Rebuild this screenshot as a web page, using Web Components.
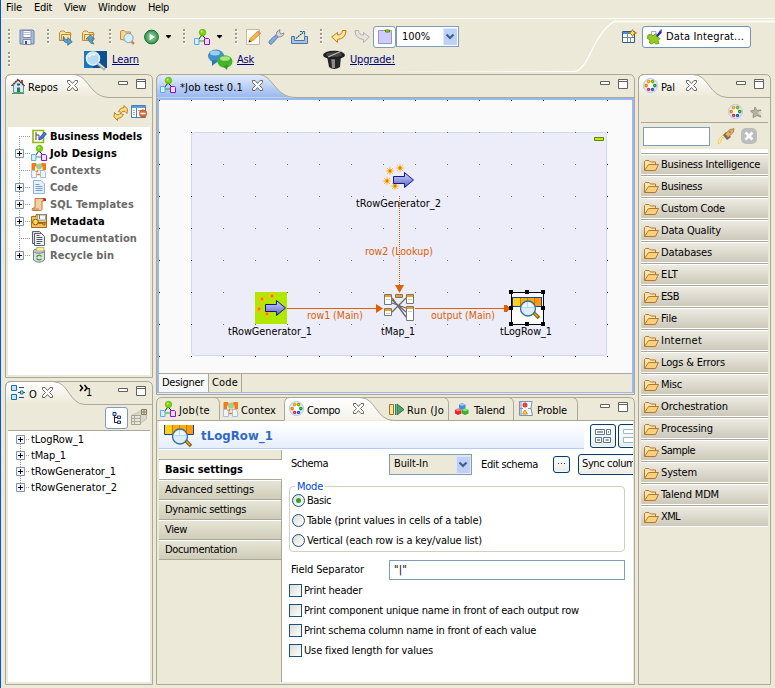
<!DOCTYPE html>
<html lang="en">
<head>
<meta charset="utf-8">
<title>Job designer</title>
<style>
html,body{margin:0;padding:0}
body{width:775px;height:688px;overflow:hidden;background:#ece9d8;color:#000;font:11px/14px "DejaVu Sans Condensed","DejaVu Sans",sans-serif;font-stretch:condensed}
</style>
</head>
<body>
<ide-window></ide-window>
<script>
const shapes = {
  job: (a='') => `<path d="M8 6L4 11M8 6L13 11" stroke="#222" fill="none"/><path d="M5 12H12" stroke="#18b020" fill="none"/><circle cx="8.500" cy="3.500" r="3.200" fill="#79d70a" stroke="#4a9a10" stroke-width=".6"/><circle cx="7.600" cy="2.600" r="1.100" fill="#c8f060"/><path d="M.500 9.500h3.500l1 1v5h-4.500z" fill="#d8efff" stroke="#58aef0"/><path d="M10.500 9.500h4l1 1v5h-5z" fill="#f0dcff" stroke="#8c10d8"/>`,
  palette: () => `<circle cx="7.500" cy="7.500" r="7" fill="#dfe9f8" stroke="#b4c9e6"/><circle cx="7.500" cy="7.500" r="3" fill="#fff"/><g fill="#fff" stroke-width="1.400"><circle cx="5.600" cy="3.600" r="1.100" stroke="#f0a000"/><circle cx="9.600" cy="3.600" r="1.100" stroke="#8aa800"/><circle cx="3.200" cy="7.600" r="1.100" stroke="#f08000"/><circle cx="11.800" cy="7.600" r="1.100" stroke="#10a020"/><circle cx="5.600" cy="11.400" r="1" stroke="#e02040"/><circle cx="9.500" cy="11.400" r="1" stroke="#1850d0"/></g>`,
  folder: (y=0) => `<path d="M1.500 13.500V4.500L2.500 3.500H6L7.500 5H12.500V7" fill="#fde7ae" stroke="#b8772a"/><path d="M1.500 13.500L5.500 7.500H15.500L12.500 13.500Z" fill="#fbd07c" stroke="#b8772a"/>`,
};
const log = `<path d="M.5 0V9.500H9M21 9.500H29.500V0" fill="none" stroke="#183ca8"/><path d="M1 0H29V9H1z" fill="#ffb000"/><path d="M1 0H8V9H1z" fill="#ffd018"/><path d="M22 0h7v9h-7z" fill="#ff9a00"/><path d="M8.500 0V9M15.500 0V9M22.500 0V9" stroke="#c87800"/><path d="M21 15L27 21" stroke="#8a6510" stroke-width="3.500"/><path d="M21 15L26 20" stroke="#d8b040" stroke-width="1.200"/><circle cx="16" cy="11.500" r="7.500" fill="#d6edfc" fill-opacity=".93" stroke="#3a6c94" stroke-width="1.300"/><path d="M11 8q5-5 10 0v3H11z" fill="#fff" opacity=".6"/><path d="M15.500 5v6M10 10.500h12" stroke="#b8d8f0"/>`;
const spark = (x,y) => `<g transform="translate(${x} ${y})"><path d="M0-5L1-1L5 0L1 1L0 5L-1 1L-5 0L-1-1Z" fill="#ffc020"/><path d="M-3-3L3 3M3-3L-3 3" stroke="#f8b820" stroke-width=".9"/><circle r="1.400" fill="#e87800"/></g>`;
const rowgen = `${spark(7,7)}${spark(17,4)}${spark(4,17)}${spark(12,22)}<path d="M10.500 12.500H21.500V8.500L30.500 16L21.500 23.500V19.500H10.500Z" fill="url(#arrowFill)" stroke="#14148c"/>`;
const icons = {
  save:[16,16,`<path d="M1 1H14L15 2V15H1Z" fill="#a9bedd" stroke="#6884b4"/><path d="M4 1.500H12V8.500H4Z" fill="#fff" stroke="#88a"/><path d="M5 3.500h6M5 5.500h6" stroke="#b4c4dc"/><path d="M4 10.500h8v5H4z" fill="#e9edf3" stroke="#7d8eac"/><path d="M6 12h2v3H6z" fill="#456"/>`],
  imp:[16,16,`<path d="M1.500 11.500V3.500L3 2H6L7.500 3.500H12.500V11.500Z" fill="#fde2a0" stroke="#c48a34"/><path d="M3.500 11V5.500H13.500" fill="none" stroke="#c48a34"/><path d="M5 8Q5.500 11 9.500 11V8.500L14.500 12L10.500 16V14Q4 14 5 8Z" fill="#5ba0cc" stroke="#276a94" stroke-width=".7" transform="rotate(10 9 11)"/>`],
  exp:[16,16,`<path d="M1.500 11.500V3.500L3 2H6L7.500 3.500H12.500V11.500Z" fill="#fde2a0" stroke="#c48a34"/><path d="M3.500 11V5.500H13.500" fill="none" stroke="#c48a34"/><path d="M13 15Q8 14.500 7.500 10H5L9.500 6L13.500 10H11Q11 13 13 15Z" fill="#5ba0cc" stroke="#276a94" stroke-width=".7"/>`],
  find:[17,16,`<path d="M1.500 10.500V2.500L3 1.500H5L6.500 3H11.500V5L10 11.500Z" fill="#fbd48c" stroke="#c48a34"/><path d="M12 12L15 15" stroke="#d88838" stroke-width="2.500"/><circle cx="9.500" cy="9" r="4.600" fill="#d9ecfb" stroke="#7aa6d4"/>`],
  run:[16,16,`<circle cx="7.500" cy="8" r="6.900" fill="#3f9c58" stroke="#1d7038"/><circle cx="7.500" cy="8" r="5" fill="#68b478"/><path d="M5.500 4.500V11.500L11 8Z" fill="#fff"/>`],
  arrow:[7,4,`<path d="M1 0H6V1L3.500 3.500L1 1Z"/>`],
  grip:[3,15,`<path d="M1.500 1V15" stroke="#fff" stroke-width="2" stroke-dasharray="2 2"/><path d="M1 0V15" stroke="#9d9a8c" stroke-width="2" stroke-dasharray="2 2"/>`],
  job:[16,16,shapes.job()],
  edit:[16,16,`<path d="M.500.500H13.500V15.500H.500Z" fill="#fffdf6" stroke="#c0b8a0"/><path d="M3 13L4 9.500L12 2L14.500 4.500L6.500 12Z" fill="#f8b840" stroke="#b8803c" stroke-width=".7"/><path d="M11 3L13.500 5.500L15 4L12.500 1.500Z" fill="#d49080"/><path d="M2.500 13.500L5 12.500L3.500 11Z" fill="#222"/>`],
  wrench:[17,16,`<path d="M1 14Q0 12 8 6L10 8Q4 15 3 15.500Z" fill="#87aadf" stroke="#5378b4"/><path d="M8 6Q8 2 12 .7L11.500 3L13 5L16 4Q15.500 8 10.500 8Z" fill="#d8d9dc" stroke="#888b92"/>`],
  share:[17,16,`<path d="M.500 7.500H3.500V11.500H13.500V7.500H16.500V14.500H.500Z" fill="#a8c3e8" stroke="#52739e"/><path d="M5 9.500L12 3.500M9 2.500H13.500V6.500" fill="none" stroke="#13648c" stroke-width="1.200" stroke-dasharray="2 .6"/>`],
  undo:[16,15,`<path d="M6.500 13.500L.700 8L6.500 3.500V6Q11 6 11.500 1.500H15Q15 9.500 6.500 10.500Z" fill="#fde4a0" stroke="#c08010"/>`],
  redo:[16,15,`<path d="M9.500 13.500L15.300 8L9.500 3.500V6Q5 6 4.500 1.500H1Q1 9.500 9.500 10.500Z" fill="#e4e3de" stroke="#b5b3aa"/>`],
  note:[14,15,`<path d="M.500 1.500H13.500V14.500H.500Z" fill="#ccccff" stroke="#9797c0"/><path d="M7.500 1H11.500V3H7.500Z" fill="#a0f000" stroke="#5d7f00"/>`],
  persp:[15,15,`<path d="M.500 2.500H12.500V13.500H.500Z" fill="#fff" stroke="#365f7f"/><path d="M1 3H12V5H1Z" fill="#4a90d8"/><path d="M5.500 5V13M1 8.500H12M8.500 9V13" stroke="#6f8ca0"/><path d="M10.500.500L11.800 3L14.500 4L11.800 5L10.500 7.500L9.200 5L6.800 4L9.200 3Z" fill="#ffe060" stroke="#a07008" stroke-width=".8"/>`],
  puzzle:[16,16,`<path d="M4.500 2.500H9V6M4.500 2.500V6" fill="#fff" stroke="#aaa"/><path d="M1 6L4 5.500L6 7L8 5L11 5.500L10.500 8L13 9.500L11 11.500L12 14.500L8.500 15L7.500 13L5 15L2.500 14L3 11L.500 9.500Z" fill="#93cc22" stroke="#6fa716"/><path d="M9 7L13 1.500L15 1L14.500 4L10.500 8Z" fill="#2020c0"/><path d="M12.500 1L15 0L14.500 3Z" fill="#6b8cff"/>`],
  learn:[24,20,`<path d="M0 1H23V18H0Z" fill="#1678c4"/><path d="M13 1H23V18H9Z" fill="#0c4f92"/><circle cx="9" cy="8.500" r="6.500" fill="#b5dcf2" stroke="#e8f4fa" stroke-width="1.500"/><path d="M5 7Q7 3 11 5" stroke="#fff" fill="none" stroke-width="1.500"/><path d="M13.500 13L21 19.500" stroke="#a7afb7" stroke-width="3"/><path d="M13.500 12.500L20 18" stroke="#f4f4f4"/>`],
  ask:[25,21,`<ellipse cx="8" cy="7" rx="8" ry="6.500" fill="#4292c8"/><path d="M4 11L4 17L10 12Z" fill="#2a78b0"/><ellipse cx="7" cy="4" rx="5" ry="2.500" fill="#9ed0ee"/><ellipse cx="17" cy="12.500" rx="7.500" ry="6.200" fill="#44b42c"/><path d="M15 17L19 21L20 16Z" fill="#329a20"/><ellipse cx="17" cy="9.500" rx="5" ry="2.300" fill="#a8e480"/>`],
  hat:[25,21,`<path d="M5 7H19L18 18Q12 22 7 18Z" fill="#262626"/><path d="M9 8H13V19H10Z" fill="#8b8b8b"/><ellipse cx="12" cy="6" rx="11" ry="4.300" fill="#202020"/><ellipse cx="12" cy="5.500" rx="8" ry="2.300" fill="#484848"/><path d="M6 8L22 1" stroke="#bbb" stroke-width="1.300"/><path d="M20 2L23 .500" stroke="#eee" stroke-width="2"/>`],
  home:[14,16,`<path d="M10 2h2v5h-2z" fill="#a04828"/><path d="M2.500 7V14.500H12.500V7L7.500 2Z" fill="#d7e8f6" stroke="#6a8fa8"/><path d="M.500 8L7 1.500L13.500 8" fill="none" stroke="#5d3320" stroke-width="1.500" stroke-dasharray="2 .5"/><path d="M6 9.500H9V14H6Z" fill="#2f7f45"/><path d="M6 6.500h3" stroke="#28527a" stroke-width="2"/><path d="M1 15.500H13" stroke="#4aa04a"/>`],
  close:[11,11,`<path d="M.500.500H3L5.500 3.500L8 .500H10.500V2.500L7.500 5.500L10.500 8.500V10.500H8L5.500 7.500L3 10.500H.500V8.500L3.500 5.500L.500 2.500Z" fill="#fff" stroke="#6b6a62"/>`],
  min:[10,4,`<path d="M.500.500H9.500V3.500H.500Z" fill="#fff" stroke="#63625c"/>`],
  max:[10,10,`<path d="M.500.500H9.500V9.500H.500Z" fill="#fff" stroke="#63625c"/><path d="M1 2.500H9" stroke="#63625c"/>`],
  sync:[16,16,`<path d="M5.500 6.500Q7 2.500 11 2.500L11 .500L14.500 4L14 8.500L12 6.500Q9 5.500 8.500 7.500Z" fill="#fcdc80" stroke="#b07818" stroke-width=".9"/><path d="M10.500 9.500Q9 13.500 4.500 13.500L4.500 15.500L1 12L1.500 7.500L3.500 9.500Q6.500 10.500 7 8.500Z" fill="#fcdc80" stroke="#b07818" stroke-width=".9"/>`],
  filter:[16,14,`<path d="M.500.500H14.500V12.500H.500Z" fill="#fff" stroke="#4a82b8"/><path d="M1 1h13v2H1z" fill="#5b9cda"/><path d="M5.500 3V12" stroke="#4a82b8"/><path d="M2 5.500h2M2 7.500h2M2 9.500h2M7 5.500h4" stroke="#90b4d4"/><circle cx="12" cy="8.500" r="3.700" fill="#e46a30" stroke="#b84818" stroke-width=".6"/><path d="M9.500 8.500H14.500" stroke="#fff" stroke-width="1.500"/>`],
  biz:[16,15,`<path d="M2 1.500H12.500V13.500H2Z" fill="#fff" stroke="#8eb800" stroke-width="1.600"/><path d="M5 3v3h3v5M5 6v5" stroke="#444" fill="none"/><path d="M8 11L9 8L13.500 3L15.500 5L11 10Z" fill="#3f74e0" stroke="#1b3aa0" stroke-width=".6"/>`],
  ctx:[15,15,`<path d="M1 .500H5V3H3.500V8H1ZM11 .500H14.500V7H12V3H10.500V.500Z" fill="#f57b14" stroke="#f57b14"/><circle cx="8" cy="3.500" r="3" fill="#a2cc8a"/><path d="M7 7L5 10M9 7L11 10M6 11.500h4" stroke="#f57b14" stroke-width="1.500" fill="none"/><path d="M.500 7.500h3.500l1.500 2V14.500H.500ZM9.500 7.500h3.500l1.500 2V14.500H9.500Z" fill="#eef6ff" stroke="#a6bce0"/>`],
  code:[12,14,`<path d="M.500.500H8L11.500 4V13.500H.500Z" fill="#e8f1fc" stroke="#8fb3e0"/><path d="M2.500 4.500h4M2.500 6.500h7M2.500 8.500h7M2.500 10.500h7" stroke="#6f9cd8"/>`],
  sql:[15,15,`<path d="M4 1.500H13Q15 2 13.500 4H11V12.500Q10 14 8 13.500H1.500Q.500 12 2 11H4Z" fill="#f5cf9c" stroke="#b87840"/><path d="M2 12H8" stroke="#c08048"/><path d="M12 1L15 1.500V4L12.500 4Z" fill="#b03820"/>`],
  meta:[16,14,`<path d="M.500 2.500H5V.500H15.500V13.500H.500Z" fill="#f0c060" stroke="#a86c18"/><path d="M6.500 1h8v5H6.500z" fill="#f4f8ff" stroke="#8ca8c0"/><path d="M1 8.500H15M8.500 1V5" stroke="#a86c18"/><circle cx="4.500" cy="8" r="2.800" fill="#ffdc50" stroke="#985c08"/><path d="M7 8.500H14V11H12V9.500H7Z" fill="#e09a18" stroke="#8b5808" stroke-width=".7"/>`],
  doc:[15,15,`<path d="M1.500.500H8.500L11.500 3.500V12.500H1.500Z" fill="#d4dbe2" stroke="#566370"/><path d="M3.500 2.500H10.500L13.500 5.500V14.500H3.500Z" fill="#eef2f5" stroke="#566370"/><path d="M5.500 6.500h6M5.500 8.500h6M5.500 10.500h6M5.500 12.500h4" stroke="#4c5866"/><path d="M5.500 4.500h3" stroke="#c03030"/>`],
  bin:[14,16,`<path d="M1.500 4V13Q7 17.500 12.500 13V4Z" fill="#d9dfe6" stroke="#7b848d"/><ellipse cx="7" cy="4" rx="5.700" ry="2.200" fill="#c8d0d8" stroke="#77818a"/><path d="M4.500.500H12V4H4.500Z" fill="#f4f0a8" stroke="#a8a048" stroke-width=".7"/><path d="M4.500 10Q7 6.500 9.500 9.500M9.500 12Q7 14 4.500 11.500" stroke="#3fa01c" stroke-width="1.300" fill="none"/>`],
  plus:[9,9,`<path d="M.500.500H8.500V8.500H.500Z" fill="#f7f6f1" stroke="#7b94b8"/><path d="M2 4.500H7M4.500 2V7" stroke="#000"/>`],
  outline:[15,16,`<path d="M.500.500H5.500V5.500H.500ZM.500 9.500H5.500V14.500H.500Z" fill="#c5e4fb" stroke="#1272a8"/><path d="M8 2.500h5M8 12.500h5M7 7.500H9M12 7.500h2" stroke="#184f80"/><path d="M9.500 6h2.500v3H9.500z" fill="#c5e4fb" stroke="#1272a8"/>`],
  treebtn:[10,12,`<path d="M2.500 3V10.500H5M2.500 5.500H5" fill="none" stroke="#222"/><path d="M1 .500H4V3.500H1ZM5.500 4h3v2.500h-3zM5.500 9h3v2.500h-3z" fill="#d5e5f5" stroke="#203878"/>`],
  sheet:[16,16,`<path d="M.500 6.500L11 1.500H15.500V10L9 14.500H.500Z" fill="#d8d7cb" stroke="#c4c3b6"/><path d="M.500 6.500H9.500V15.500H.500Z" fill="#e8e7dd" stroke="#a3a294"/><path d="M1 9.500h9M1 12.500h9M3.500 7V15" stroke="#aaa999"/><path d="M10.500.500h5v5h-5z" fill="#ffe878" stroke="#777"/><path d="M13 1v4M11 3h4" stroke="#777"/>`],
  palette:[15,15,shapes.palette()],
  star:[13,12,`<path d="M5 1L7 4.500L11 4L9 7L11 11L7 9.500L3 11.500L3.500 7.500L.500 5L4 4.500Z" fill="#b4b1a5" stroke="#97958a"/><path d="M8 7h4M10 5v4" stroke="#dddace" stroke-width="1.500"/>`],
  rocket:[17,16,`<path d="M7 9L4 10L2 15L0 16L1 11L5 7Z" fill="#fff4b0" stroke="#f4cc68"/><path d="M5 7L8 4L13 9L9 12Z" fill="#6f6a68"/><path d="M7 6L12 1.500L16 .700L15.500 4L10 9.500Z" fill="#f2ad58" stroke="#a87030" stroke-width=".8"/><circle cx="12" cy="4" r="1" fill="#4a90c0"/>`],
  clear:[16,16,`<rect width="16" height="16" rx="5" fill="#bcbcbc"/><path d="M4.500 4.500L11.500 11.500M11.500 4.500L4.500 11.500" stroke="#fff" stroke-width="2.600"/>`],
  folder:[16,16,shapes.folder()],
  play:[16,13,`<path d="M.500 1.500H4.500V11.500H.500Z" fill="#ffe09c" stroke="#a17420"/><path d="M6.500 1V12" stroke="#308050"/><path d="M8 1V12L15 6.500Z" fill="#4ea070" stroke="#28744a"/>`],
  cubes:[14,12,`<path d="M4 1.500L7 0L10.500 1.500V5.500L7 7L4 5.500Z" fill="#4090e0"/><path d="M4 1.500L7 0L10.500 1.500L7 3Z" fill="#9ccbf8"/><path d="M0 7L3 5.500L6.500 7V10.500L3 12L0 10.500Z" fill="#e02828"/><path d="M0 7L3 5.500L6.500 7L3 8.500Z" fill="#f08080"/><path d="M7 7L10 5.500L13.500 7V10.500L10 12L7 10.500Z" fill="#2fae2f"/><path d="M7 7L10 5.500L13.500 7L10 8.500Z" fill="#90e070"/>`],
  problems:[14,15,`<path d="M.500.500H13L12 7.500L13.500 14.500H.500Z" fill="#f1f6fb" stroke="#7c94b0"/><path d="M.500 7.500H4M9 7.500H12M2 1v13" stroke="#7c94b0"/><circle cx="6" cy="4" r="2.500" fill="#e04040"/><path d="M3.500 13L6 9L8.500 13Z" fill="#ffd060" stroke="#e09010"/>`],
  log:[30,22,log],
  layout:[16,14,`<path d="M.500.500H9.500V5.500H.500ZM11.500.500H15.500V5.500H11.500ZM.500 8.500H6.500V13.500H.500ZM8.500 8.500H15.500V13.500H8.500Z" fill="#fff" stroke="#557792"/><path d="M2 3H8M2 11H5M10.500 11H13.500M13 3H14" stroke="#90a0ac" stroke-width="2"/>`],
  rows:[16,14,`<path d="M.500.500H15.500V4.500H.500ZM.500 8.500H15.500V13.500H.500Z" fill="#fff" stroke="#9bb7cc"/>`],
  dots:[7,2,`<path d="M0 .500h7" stroke="#1f2f6a" stroke-dasharray="1 2"/>`],
  drop:[14,17,`<rect width="14" height="17" rx="1.500" fill="#bed1fb"/><path d="M.500 16V.500H13.500" stroke="#dbe6ff" fill="none"/><path d="M3.500 6.500L7 10L10.500 6.500" fill="none" stroke="#435f88" stroke-width="2.200"/>`],
  more:[10,7,`<path d="M1 0L3.500 3L1 6M5.500 0L8 3L5.500 6" fill="none" stroke="#000" stroke-width="1.500"/>`],
};
function define(name, css, view, after){
  customElements.define(name, class extends HTMLElement{
    connectedCallback(){
      if(this.shadowRoot) return;
      this.attachShadow({mode:'open'}).innerHTML = `<style>*{box-sizing:border-box}:host{box-sizing:border-box}${css}</style>` + (typeof view==='function'?view(this):view);
      if(after) after(this);
    }
  });
}
define('ui-icon', ':host{display:block;flex:none;line-height:0}svg{display:block;overflow:visible}', h=>{
  const [w,ht,s]=icons[h.getAttribute('name')];
  return `<svg width="${w}" height="${ht}" viewBox="0 0 ${w} ${ht}">${s}</svg>`;
});
define('menu-bar', ':host{display:flex;height:19px;padding:1px 0 0 5px;border-bottom:1px solid #fff}', 
  [['File',16,0],['Edit',18,12],['View',22,12],['Window',38,12],['Help',21,12]].map(([t,w,m])=>`<fit-text w="${w}" style="margin-left:${m}px">${t}</fit-text>`).join(''));
define('combo-box', ':host{display:flex;flex:none;align-items:center;justify-content:space-between;background:var(--bg,#fff);border:1px solid #7f9db9;padding:0 1px 0 var(--pad,5px)}', '<slot></slot><ui-icon name="drop"></ui-icon>');
define('tool-bar', `:host{display:block;position:relative;height:55px}
.curve{position:absolute;left:0;top:0}
.row{display:flex;position:relative;height:29px;align-items:center;padding:6px 0 0 7px}
.two{height:23px;padding:0 0 0 7px}
.toggle{width:23px;height:22px;border:1px solid #7f9db9;border-radius:3px;background:#fff;display:grid;place-items:center;margin-left:3px}
combo-box{width:63px;height:21px}
.persp{display:flex;align-items:center;width:109px;height:22px;border:1px solid #6f94b8;border-radius:3px;background:#fff;padding-left:4px;gap:3px;margin-left:5px}
a{color:#00007b;text-decoration:underline}a fit-text{text-decoration:inherit}`,
()=>{
  const i=(n,m)=>`<ui-icon name="${n}" style="margin-left:${m}px"></ui-icon>`;
  return `<svg class="curve" width="774" height="55"><defs><linearGradient id="f"><stop offset="0" stop-color="#fff" stop-opacity="0"/><stop offset="1" stop-color="#fff"/></linearGradient></defs><path d="M360 52h215v1H360z" fill="url(#f)"/><path d="M574 52.500Q582 51 591 31T613 2.500H774" fill="none" stroke="#fff" stroke-width="1.300"/></svg>
  <div class="row">${i('grip',0)}${i('save',8)}${i('grip',12)}${i('imp',8)}${i('exp',7)}${i('grip',12)}${i('find',7)}${i('run',8)}${i('arrow',5)}${i('grip',11)}${i('job',8)}${i('arrow',6)}${i('grip',12)}${i('edit',8)}${i('wrench',6)}${i('share',6)}${i('grip',12)}${i('undo',8)}${i('redo',7)}<div class="toggle"><ui-icon name="note"></ui-icon></div><combo-box><fit-text w="28">100%</fit-text></combo-box>${i('persp',163)}<div class="persp"><ui-icon name="puzzle"></ui-icon><fit-text w="78">Data Integrat...</fit-text></div></div>
  <div class="row two">${i('grip',0)}${i('learn',73)}<a style="margin-left:4px"><fit-text w="27">Learn</fit-text></a>${i('ask',69)}<a style="margin-left:4px"><fit-text w="17">Ask</fit-text></a>${i('hat',68)}<a style="margin-left:3px"><fit-text w="45">Upgrade!</fit-text></a></div>`;
});
/* A view stack: rounded frame, curved selected tab and a body. */
define('ide-panel', `:host{display:flex;flex-direction:column;position:relative}
.frame{position:absolute;left:0;top:0}
.head{position:relative;display:flex;height:24px;align-items:flex-start;padding:5px 7px 0 0}
.ctl{display:flex;gap:8px;margin-left:auto;align-items:flex-start}
.body{position:relative;flex:1;min-height:0;margin:var(--m,0 3px 3px);display:flex;flex-direction:column}`,
h=>{
  const n=k=>+(h.getAttribute(k)||0), w=n('w'),t=n('h'),a=n('ts'),c=n('cs'),e=n('ce'),act=h.hasAttribute('active');
  const seps=(h.getAttribute('seps')||'').split(',').filter(Boolean).map(x=>`<path d="M${+x-5} .5Q${x-.5} 1.500 ${x-.5} 6.500V23"/>`).join('');
  const curve=`C${c+16} .5 ${c+16} 23.500 ${e} 23.500`;
  const tab=`M${a+.5} 23.500V6.500Q${a+.5} .500 ${a+6} .500H${c}${curve}`;
  return `<svg class="frame" width="${w}" height="${t}"><defs><linearGradient id="g" x2="0" y2="1"><stop offset="0" stop-color="${act?'#e4ecfc':'#fff'}"/><stop offset="1" stop-color="${act?'#99b8f0':(a?'#f4f2e8':'#ece9d8')}"/></linearGradient></defs>
  <g fill="none" stroke="#aca899"><path d="${tab}Z" stroke="none" fill="url(#g)"/>${act?`<path d="M1 24H${w-1}V${t-2}H1Z" fill="#99b8f0" stroke="none"/>`:''}
  <path d="M.500 ${t-.5}V6Q.500.500 6 .500H${w-6}Q${w-.5} .500 ${w-.5} 6V${t-.5}Z"/><path d="M${e} 23.500H${w-1}M.500 23.500H${a}"/><path d="${tab}"/>${seps}</g></svg>
  <div class="head"><slot name="head"></slot><div class="ctl"><ui-icon name="min" style="margin-top:2px"></ui-icon><ui-icon name="max"></ui-icon></div></div><div class="body"><slot></slot></div>`;
});
define('repo-view', `:host{display:flex;flex-direction:column;flex:1}
.bar{display:flex;height:29px;padding:7px 3px 0 0;gap:2px;justify-content:flex-end}
.tree{flex:1;background:#fff;padding-top:1px;font-weight:bold;position:relative}
.tree:before{content:"";position:absolute;left:11px;top:9px;height:119px;border-left:1px dotted #999}
.row{display:flex;height:17px;align-items:center;position:relative}
.exp{width:22px;padding-left:7px;height:17px;display:flex;align-items:center}
.leaf{padding-left:12px}
.exp:after{content:"";flex:1;border-top:1px dotted #999;margin-left:1px}
.ic{width:17px;display:grid;place-items:center;margin:-1px 3px 0 0}.dim{color:#6a6a6a}`,
`<div class="bar"><ui-icon name="sync"></ui-icon><ui-icon name="filter"></ui-icon></div><div class="tree">`+
[['Business Models','biz',92,0,0],['Job Designs','job',67,1,0],['Contexts','ctx',51,0,1],['Code','code',28,1,1],['SQL Templates','sql',84,1,1],['Metadata','meta',55,1,0],['Documentation','doc',87,0,1],['Recycle bin','bin',64,1,1]].map(([t,i,w,x,d])=>`<div class="row"><div class="exp ${x?'':'leaf'}">${x?'<ui-icon name="plus"></ui-icon>':''}</div><div class="ic"><ui-icon name="${i}"></ui-icon></div><fit-text class="${d?'dim':''}" w="${w}">${t}</fit-text></div>`).join('')+`</div>`);
define('outline-view', `:host{display:flex;flex-direction:column;flex:1}
.bar{display:flex;height:26px;padding:2px 3px 0 0;gap:3px;justify-content:flex-end;border-bottom:1px solid #aca899}
.btn{width:23px;height:22px;border:1px solid #7f9db9;border-radius:3px;background:#fff;display:grid;place-items:center}
.tree{flex:1;background:#fff;position:relative}
.tree:before{content:"";position:absolute;left:12px;top:8px;height:50px;border-left:1px dotted #999}
.row{display:flex;height:16px;align-items:center;padding-left:8px;position:relative}
.row:after{content:"";order:1;width:3px;border-top:1px dotted #999;margin:0 2px 0 1px}fit-text{order:2;margin-top:1px}`,
`<div class="bar"><div class="btn"><ui-icon name="treebtn"></ui-icon></div><ui-icon name="sheet" style="margin-top:2px"></ui-icon></div><div class="tree">`+
[['tLogRow_1',53],['tMap_1',35],['tRowGenerator_1',85],['tRowGenerator_2',86]].map(([t,w])=>`<div class="row"><ui-icon name="plus"></ui-icon><fit-text w="${w}">${t}</fit-text></div>`).join('')+`</div>`);
/* The free canvas of the job diagram, 32px grid, window coordinates shifted by its origin. */
define('job-canvas', `:host{display:block;height:273px;background:#fafafa;overflow:hidden}svg{display:block}text{font:inherit}`,
()=>{
  let dots='';
  for(let y=100;y<373;y+=32)for(let x=159;x<632;x+=32){const inn=x>191&&x<607&&y>=132&&y<356;dots+=`<path d="M${x} ${y}h1v1h-1z" fill="${inn?'#66667a':'#000'}"/>`;}
  const t=(s,x,y,w,c='#000')=>`<text x="${x}" y="${y}" textLength="${w}" lengthAdjust="spacingAndGlyphs" fill="${c}">${s}</text>`, o='#e06000';
  const tbl=(x,y,w,h)=>`<path d="M${x+.5} ${y+.5}h${w}v${h}h-${w}z" fill="#fff" stroke="#777"/><path d="M${x+1} ${y+1}h${w-1}v2h-${w-1}z" fill="#f5a000"/>`+(h>5?`<path d="M${x+2} ${y+5.500}h${w-3}" stroke="#ccc"/>`:'');
  const handles=[[0,0],[16,0],[32,0],[0,16],[32,16],[0,32],[16,32],[32,32]].map(([x,y])=>`<path d="M${509+x} ${290+y}h4v4h-4z"/>`).join('');
  return `<svg width="473" height="273" viewBox="159 100 473 273"><defs><linearGradient id="arrowFill" x2="0" y2="1"><stop offset="0" stop-color="#cfd4fa"/><stop offset="1" stop-color="#5a64c8"/></linearGradient></defs>
  <rect x="191.500" y="132.500" width="415" height="223" rx="3" fill="#ededfa" stroke="#cddaf0"/>${dots}
  <path d="M594.500 137.500h9v3h-9z" fill="#b8f000" stroke="#628400"/>
  <path d="M399.500 196V287" stroke="${o}" stroke-dasharray="1 1"/><path d="M395 285h9l-4.500 8z" fill="${o}"/>
  <path d="M287 308.500H379M415 308.500H507" stroke="${o}"/><path d="M376 304v9l7-4.500zM504 305h3l3 3.500l-3 3.500h-3z" fill="${o}"/>
  <g transform="translate(383 164)">${rowgen}</g>
  <path d="M255 292h32v32h-32z" fill="#b0e800"/><g transform="translate(255 292)">${rowgen}</g>
  <path d="M392 298L406 317M392 303L406 308M392 312L406 298M392 300L406 312" stroke="#686868" stroke-width="1.300"/>
  ${tbl(384,294,7,10)}${tbl(384,308,7,7)}${tbl(395,294,7,3)}${tbl(406,294,7,9)}${tbl(406,306,7,14)}
  <rect x="511.500" y="292.500" width="31" height="31" fill="#fff"/><g transform="translate(512 297)">${log}<path d="M0 .500H30" stroke="#183ca8"/></g>
  <rect x="511.500" y="292.500" width="32" height="32" fill="none" stroke="#000"/>${handles}
  ${t('tRowGenerator_2',356,207,85)}${t('row2 (Lookup)',365,255,68,o)}${t('row1 (Main)',307,319,56,o)}${t('output (Main)',431,319,64,o)}${t('tRowGenerator_1',228,335,84)}${t('tMap_1',381,335,34)}${t('tLogRow_1',500,335,52)}</svg>`;
});
define('editor-tabs', `:host{display:flex;height:19px;background:#ece9d8;border-top:1px solid #aca899}
span{border-right:1px solid #aca899;padding:0 3px;display:flex;align-items:center}.on{background:#fafafa;padding-right:4px}`,
`<span class="on"><fit-text w="42">Designer</fit-text></span><span><fit-text w="26">Code</fit-text></span>`);
define('check-item', `:host{display:flex;align-items:center;height:20px;gap:2px}i{width:13px;height:13px;margin-bottom:1px;border:1px solid #1c5180;background:linear-gradient(135deg,#dcdcd4,#fff)}
:host([radio]) i{border-radius:50%;display:grid;place-items:center}:host([checked]) i:after{content:"";width:5px;height:5px;border-radius:50%;background:#26a826}`, '<i></i><slot></slot>');
define('component-view', `:host{display:flex;flex-direction:column;flex:1;background:#fff;overflow:hidden}
.title{display:flex;height:29px;flex:none;padding-top:2px}
.name{display:flex;flex:none;width:425px;height:26px;background:linear-gradient(#fff,#e6eefc);border-bottom:1px solid #b4ccf4;padding-left:5px;gap:7px}
.name ui-icon{margin-top:2px}
.name fit-text{font:bold 13px/26px "DejaVu Sans Condensed","DejaVu Sans",sans-serif;color:#316ac5}
.b{flex:none;border:1px solid #003c74;border-radius:3px;background:linear-gradient(#fff,#ecebe5);display:grid;place-items:center;box-shadow:inset 0 0 0 1px #f5f4ee}
.big{width:26px;height:24px;margin:1px 0 0 2px;align-self:flex-start}.title .big:nth-child(2){margin-left:6px}
.main{display:flex;flex:1}
.side{width:123px;flex:none;background:#ece9d8;border-right:1px solid #aca899;display:flex;flex-direction:column;padding-top:10px}
.side div{height:20px;border-top:1px solid #fff;border-bottom:1px solid #aca899;background:linear-gradient(#e6e4d5,#cfcdb9);padding:2px 0 0 6px;display:flex}
.side .on{background:#fff;width:123px;font-weight:bold;border-top:1px solid #aca899;margin-top:-1px;height:21px;padding-top:3px}
.form{flex:1;min-width:0;padding:3px 0 0 7px;display:flex;flex-direction:column}
.line{display:flex;align-items:center;height:22px;flex:none;padding-left:2px}
.line combo-box{width:83px;height:21px;margin-left:61px;--bg:#ece9d8;--pad:4px}
.group{flex:none;width:336px;height:74px;margin-top:7px;position:relative;padding:9px 0 0 3px}
.group:before{content:"";position:absolute;inset:4px 0 4px 0;border:1px solid #d0d0bf;border-radius:4px}
.group .cap{position:absolute;left:6px;top:-2px;background:#fff;color:#0046d5;padding:0 2px}
.group check-item{position:relative}
.field{display:flex;align-items:center;padding-left:2px;height:20px;margin-bottom:1px}
.inp{width:236px;height:20px;border:1px solid #7f9db9;margin-left:25px;padding:2px 4px}`,
()=>{
  const f=(t,w)=>`<fit-text w="${w}">${t}</fit-text>`;
  return `<div class="title"><div class="name"><ui-icon name="log"></ui-icon>${f('tLogRow_1',72)}</div><div class="b big"><ui-icon name="layout"></ui-icon></div><div class="b big"><ui-icon name="rows"></ui-icon></div></div>
<div class="main"><div class="side"><div class="on">${f('Basic settings',78)}</div><div>${f('Advanced settings',89)}</div><div>${f('Dynamic settings',81)}</div><div>${f('View',22)}</div><div>${f('Documentation',72)}</div></div>
<div class="form"><div class="line">${f('Schema',37)}<combo-box>${f('Built-In',34)}</combo-box><span style="margin-left:9px;padding-top:2px">${f('Edit schema',57)}</span><div class="b" style="width:17px;height:17px;margin-left:15px"><ui-icon name="dots"></ui-icon></div><div class="b" style="width:75px;height:21px;margin-left:8px;justify-items:start;padding-left:3px">${f('Sync columns',64)}</div></div>
<div class="group"><div class="cap">${f('Mode',26)}</div><check-item radio checked>${f('Basic',24)}</check-item><check-item radio>${f('Table (print values in cells of a table)',175)}</check-item><check-item radio>${f('Vertical (each row is a key/value list)',175)}</check-item></div>
<div class="field" style="margin-top:4px">${f('Field Separator',73)}<div class="inp">${f('"|"',13)}</div></div>
<check-item>${f('Print header',58)}</check-item><check-item>${f('Print component unique name in front of each output row',275)}</check-item><check-item>${f('Print schema column name in front of each value',232)}</check-item><check-item>${f('Use fixed length for values',129)}</check-item></div></div>`;
});
define('palette-view', `:host{display:flex;flex-direction:column;flex:1}
.bar{display:flex;height:25px;padding:6px 5px 0;gap:7px;justify-content:flex-end;border-bottom:1px solid #aca899}
.search{display:flex;align-items:center;height:26px;padding:0 2px}.inp{width:67px;height:19px;border:1px solid #7f9db9;background:#fff}
.list{display:flex;flex-direction:column;border-top:4px solid #fff}
.list div{display:flex;align-items:center;height:22px;padding:2px 0 0 2px;gap:2px;border-top:1px solid #aca899;border-bottom:1px solid #fff;background:linear-gradient(#efede3,#ccc9bb);box-shadow:inset 0 1px #fff}`,
`<div class="bar"><ui-icon name="palette"></ui-icon><ui-icon name="star" style="margin-top:2px"></ui-icon></div><div class="search"><div class="inp"></div><ui-icon name="rocket" style="margin-left:8px"></ui-icon><ui-icon name="clear" style="margin-left:6px"></ui-icon></div><div class="list">`+
[['Business Intelligence',99],['Business',41],['Custom Code',64],['Data Quality',60],['Databases',51],['ELT',17],['ESB',18],['File',16],['Internet',41],['Logs &amp; Errors',64],['Misc',21],['Orchestration',67],['Processing',52],['Sample',34],['System',36],['Talend MDM',58],['XML',19]].map(([t,w])=>`<div><ui-icon name="folder"></ui-icon><fit-text w="${w}">${t}</fit-text></div>`).join('')+`</div>`);
define('ide-window', `:host{display:flex;flex-direction:column;width:775px;height:688px;border-left:1px solid #0054e3;background:#ece9d8}
.work{display:grid;grid-template-columns:148px 479px 133px;gap:3px;padding-left:4px}
.col{display:flex;flex-direction:column;gap:3px}.mid{gap:2px}
ui-icon,fit-text{flex:none}`,
()=>{
  const i=(n,m,y=0)=>`<ui-icon slot="head" name="${n}" style="margin:${y}px 0 0 ${m}px"></ui-icon>`;
  const t=(s,w,m)=>`<fit-text slot="head" w="${w}" style="margin:2px 0 0 ${m}px">${s}</fit-text>`;
  return `<menu-bar></menu-bar><tool-bar></tool-bar><div class="work">
<div class="col"><ide-panel w="148" h="304" cs="68" ce="105" style="height:304px">${i('home',6,-1)}${t('Repos',30,3)}${i('close',9,1)}<repo-view></repo-view></ide-panel>
<ide-panel w="148" h="304" cs="48" ce="80" style="height:304px">${i('outline',6,-1)}${t('O',7,3)}${i('close',6,1)}${i('more',26,-1)}<fit-text slot="head" w="5" style="margin:0 0 0 -3px">1</fit-text><outline-view></outline-view></ide-panel></div>
<div class="col mid"><ide-panel active w="479" h="321" cs="102" ce="140" style="height:321px;--m:2px 3px 3px 3px">${i('job',4,-2)}${t('*Job test 0.1',63,4)}${i('close',9,1)}<job-canvas></job-canvas><editor-tabs></editor-tabs></ide-panel>
<ide-panel w="479" h="288" ts="128" cs="204" ce="238" seps="64,293,358,422" style="height:288px;--m:0 2px 3px 3px">${i('job',4,-1)}${t('Job(te',31,3)}${i('ctx',13,0)}${t('Contex',35,3)}${i('palette',13,-1)}${t('Compo',33,3)}${i('close',13,1)}${i('play',25,1)}${t('Run (Jo',37,2)}${i('cubes',11,1)}${t('Talend',31,5)}${i('problems',14,-1)}${t('Proble',30,4)}<component-view></component-view></ide-panel></div>
<ide-panel w="133" h="611" cs="55" ce="90" style="height:611px">${i('palette',5,-1)}${t('Pal',14,3)}${i('close',11,1)}<palette-view></palette-view></ide-panel></div>`;
});
/* Single-line label whose tracking is adjusted to a given width. */
define('fit-text', ':host{display:block;white-space:nowrap;flex:none}span{display:inline-block;text-decoration:inherit}', '<span><slot></slot></span>', h=>{
  const w=+h.getAttribute('w'), s=h.shadowRoot.querySelector('span'), n=h.textContent.length;
  const gap=(w-s.getBoundingClientRect().width)/n;
  s.style.letterSpacing=gap.toFixed(3)+'px';
  h.style.width=w+'px';
});
</script>
</body>
</html>
